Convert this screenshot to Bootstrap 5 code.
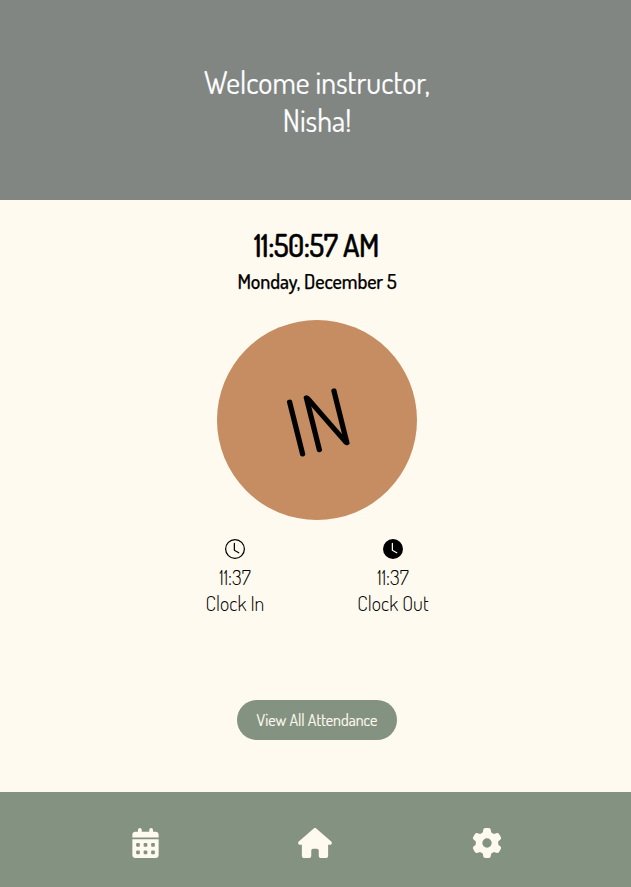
<!DOCTYPE html>
<html lang="en">
<head>
<meta charset="utf-8">
<meta name="viewport" content="width=device-width, initial-scale=1">
<title>Attendance</title>
<link href="https://cdn.jsdelivr.net/npm/bootstrap@5.3.0/dist/css/bootstrap.min.css" rel="stylesheet">
<style>
body{font-family:Dosis,Lato,"Liberation Sans",sans-serif;background:#fffaef;color:#000;height:887px;overflow:hidden}
.welcome{height:200px;background:#828683;color:#fff;padding:63px 0 0 3px}
.welcome h1{font-size:30px;font-weight:400;line-height:38px;-webkit-text-stroke:.2px #fff}
main{height:592px}
.time{font-size:30px;line-height:38px;font-weight:500;letter-spacing:-.4px;-webkit-text-stroke:.5px #000;padding:26px 0 0 2px}
.date{font-size:20px;line-height:24px;font-weight:500;letter-spacing:-.1px;-webkit-text-stroke:.25px #000;margin-top:5px;padding-left:3px}
.punch{width:200px;height:200px;background:#c58d61;margin-top:27px;margin-left:3px;border:0;color:#000}
.punch span{font-size:80px;line-height:1;font-weight:400;padding:2px 0 0 2px;transform:rotate(-14deg)}
.log{width:316px;margin:19px 3px 0 0;font-size:20px;line-height:26px;font-weight:300;letter-spacing:.05px}
.log svg{display:block;margin:0 auto 5px}
.view{width:160px;height:40px;margin:84px 0 0 3px;background:#849282;color:#fffaef;font-size:16px;font-weight:400;-webkit-text-stroke:.15px #fffaef}
footer{height:95px;background:#849282;color:#fffaef}
.tabs{width:513px;padding-top:7px}
.tabs .cal{padding-left:2px}
.tabs .home{padding-right:2px}
</style>
</head>
<body>
<header class="welcome text-center">
  <h1 class="m-0">Welcome instructor,<br>Nisha!</h1>
</header>
<main class="d-flex flex-column align-items-center">
  <div class="time">11:50:57 AM</div>
  <div class="date">Monday, December 5</div>
  <button class="punch rounded-circle d-flex align-items-center justify-content-center p-0"><span>IN</span></button>
  <div class="log d-flex text-center">
    <div class="col-6">
      <svg width="20" height="20" viewBox="0 0 16 16" fill="currentColor"><path d="M8 3.5a.5.5 0 0 0-1 0V9a.5.5 0 0 0 .252.434l3.5 2a.5.5 0 0 0 .496-.868L8 8.71V3.5z"/><path d="M8 16A8 8 0 1 0 8 0a8 8 0 0 0 0 16zm7-8A7 7 0 1 1 1 8a7 7 0 0 1 14 0z"/></svg>
      <div>11:37</div>
      <div>Clock In</div>
    </div>
    <div class="col-6">
      <svg width="20" height="20" viewBox="0 0 16 16" fill="currentColor"><path d="M16 8A8 8 0 1 1 0 8a8 8 0 0 1 16 0zM8 3.5a.5.5 0 0 0-1 0V9a.5.5 0 0 0 .252.434l3.5 2a.5.5 0 0 0 .496-.868L8 8.71V3.5z"/></svg>
      <div>11:37</div>
      <div>Clock Out</div>
    </div>
  </div>
  <button class="view btn rounded-pill border-0 p-0 d-flex align-items-center justify-content-center">View All Attendance</button>
</main>
<footer>
  <nav class="tabs mx-auto d-flex h-100 align-items-center text-center">
    <div class="col-4 cal"><svg width="27" height="30" viewBox="0 0 448 512" fill="currentColor"><path fill-rule="evenodd" d="M128 0c17.7 0 32 14.3 32 32V64H288V32c0-17.7 14.3-32 32-32s32 14.3 32 32V64h48c26.5 0 48 21.5 48 48v48H0V112C0 85.5 21.5 64 48 64H96V32c0-17.7 14.3-32 32-32zM0 192H448V464c0 26.5-21.5 48-48 48H48c-26.5 0-48-21.5-48-48V192zM80 256a16 16 0 0 0-16 16v32a16 16 0 0 0 16 16h32a16 16 0 0 0 16-16v-32a16 16 0 0 0-16-16zM208 256a16 16 0 0 0-16 16v32a16 16 0 0 0 16 16h32a16 16 0 0 0 16-16v-32a16 16 0 0 0-16-16zM336 256a16 16 0 0 0-16 16v32a16 16 0 0 0 16 16h32a16 16 0 0 0 16-16v-32a16 16 0 0 0-16-16zM80 384a16 16 0 0 0-16 16v32a16 16 0 0 0 16 16h32a16 16 0 0 0 16-16v-32a16 16 0 0 0-16-16zM208 384a16 16 0 0 0-16 16v32a16 16 0 0 0 16 16h32a16 16 0 0 0 16-16v-32a16 16 0 0 0-16-16zM336 384a16 16 0 0 0-16 16v32a16 16 0 0 0 16 16h32a16 16 0 0 0 16-16v-32a16 16 0 0 0-16-16z"/></svg></div>
    <div class="col-4 home"><svg width="34" height="30" viewBox="0 0 576 512" fill="currentColor"><path d="M575.8 255.5c0 18-15 32.1-32 32.1h-32l.7 160.2c0 2.7-.2 5.4-.5 8.1V472c0 22.1-17.9 40-40 40H456c-1.1 0-2.2 0-3.3-.1c-1.4 .1-2.8 .1-4.2 .1H416 392c-22.1 0-40-17.9-40-40V448 384c0-17.7-14.3-32-32-32H256c-17.7 0-32 14.3-32 32v64 24c0 22.1-17.9 40-40 40H160 128.1c-1.5 0-3-.1-4.5-.2c-1.2 .1-2.4 .2-3.6 .2H104c-22.1 0-40-17.9-40-40V360c0-.9 0-1.9 .1-2.8V287.6H32c-18 0-32-14-32-32.1c0-9 3-17 10-24L266.4 8c7-7 15-8 22-8s15 2 21 7L564.8 231.5c8 7 12 15 11 24z"/></svg></div>
    <div class="col-4"><svg width="30" height="30" viewBox="0 0 512 512" fill="currentColor"><path d="M495.9 166.6c3.2 8.7 .5 18.4-6.4 24.6l-43.3 39.4c1.1 8.3 1.7 16.8 1.7 25.4s-.6 17.1-1.7 25.4l43.3 39.4c6.9 6.2 9.6 15.9 6.4 24.6c-4.4 11.9-9.7 23.3-15.8 34.3l-4.7 8.1c-6.6 11-14 21.4-22.1 31.2c-5.9 7.2-15.7 9.6-24.5 6.8l-55.7-17.7c-13.4 10.3-28.2 18.9-44 25.4l-12.5 57.1c-2 9.1-9 16.3-18.2 17.8c-13.8 2.3-28 3.5-42.5 3.5s-28.7-1.2-42.5-3.5c-9.2-1.5-16.2-8.7-18.2-17.8l-12.5-57.1c-15.8-6.5-30.6-15.1-44-25.4L83.1 425.9c-8.8 2.8-18.6 .3-24.5-6.8c-8.1-9.8-15.5-20.2-22.1-31.2l-4.7-8.1c-6.1-11-11.4-22.4-15.8-34.3c-3.2-8.7-.5-18.4 6.4-24.6l43.3-39.4C64.6 273.1 64 264.6 64 256s.6-17.1 1.7-25.4L22.4 191.2c-6.9-6.2-9.6-15.9-6.4-24.6c4.4-11.9 9.7-23.3 15.8-34.3l4.7-8.1c6.6-11 14-21.4 22.1-31.2c5.9-7.2 15.7-9.6 24.5-6.8l55.7 17.7c13.4-10.3 28.2-18.9 44-25.4l12.5-57.1c2-9.1 9-16.3 18.2-17.8C227.3 1.2 241.5 0 256 0s28.7 1.2 42.5 3.5c9.2 1.5 16.2 8.7 18.2 17.8l12.5 57.1c15.8 6.5 30.6 15.1 44 25.4l55.7-17.7c8.8-2.8 18.6-.3 24.5 6.8c8.1 9.8 15.5 20.2 22.1 31.2l4.7 8.1c6.1 11 11.4 22.4 15.8 34.3zM256 336a80 80 0 1 0 0-160 80 80 0 1 0 0 160z"/></svg></div>
  </nav>
</footer>
<script src="https://cdn.jsdelivr.net/npm/bootstrap@5.3.0/dist/js/bootstrap.bundle.min.js"></script>
</body>
</html>
